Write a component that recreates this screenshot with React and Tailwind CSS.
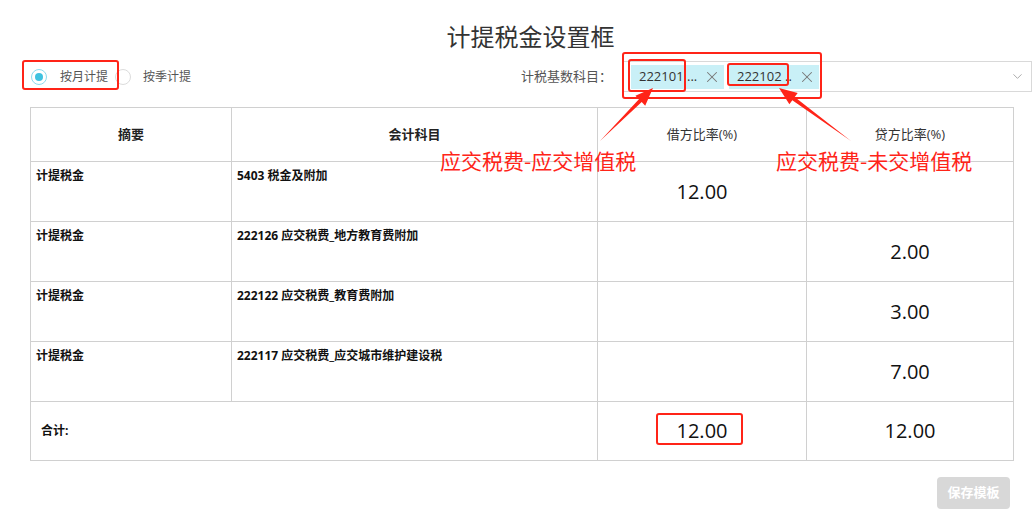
import React from "react";
import { X, ChevronDown } from "lucide-react";

const FONT = { fontFamily: '"Open Sans","Noto Sans CJK SC",sans-serif' };

function Tag({ text, w }) {
  return (
    <div className={`flex items-center h-[24px] bg-[#c9f0f7] pl-[8px] pr-[3px] ${w}`}>
      <span className="flex-1 text-[13px] text-[#333] whitespace-nowrap leading-none">{text}</span>
      <X size={18} strokeWidth={1.4} className="text-[#777]" />
    </div>
  );
}

const rows = [
  { a: "计提税金", b: "5403 税金及附加", c: "12.00", d: "" },
  { a: "计提税金", b: "222126 应交税费_地方教育费附加", c: "", d: "2.00" },
  { a: "计提税金", b: "222122 应交税费_教育费附加", c: "", d: "3.00" },
  { a: "计提税金", b: "222117 应交税费_应交城市维护建设税", c: "", d: "7.00" },
];

export default function App() {
  const bd = "border border-[#d0d0d0]";
  return (
    <div className="relative w-[1032px] h-[510px] bg-white overflow-hidden" style={FONT}>
      <div className="h-[61px] pt-[22px] pl-[29px] text-center text-[24px] leading-[30px] text-[#333]">计提税金设置框</div>

      <div className="flex items-center h-[31px]">
        <div className="flex items-center pl-[31px]">
          <span className="w-[16px] h-[16px] rounded-full border border-[#8cdcee] flex items-center justify-center">
            <span className="w-[8px] h-[8px] rounded-full bg-[#3fc2e0]" />
          </span>
          <span className="ml-[13px] text-[12px] text-[#555] w-[48px]">按月计提</span>
          <span className="ml-[7px] w-[16px] h-[16px] rounded-full border border-[#dcdcdc]" />
          <span className="ml-[12px] text-[12px] text-[#555]">按季计提</span>
        </div>
        <div className="ml-auto flex items-center">
          <span className="text-[13px] text-[#555] mr-[11px]">计税基数科目：</span>
          <div className="w-[409px] h-[31px] border border-[#d9d9d9] flex items-center pl-[7px] pr-[6px] gap-[5px]">
            <Tag text="222101 ..." w="w-[93px]" />
            <Tag text="222102 .." w="w-[90px]" />
            <ChevronDown size={15} strokeWidth={1.3} className="ml-auto text-[#999]" />
          </div>
        </div>
      </div>

      <table className="mt-[15px] ml-[30px] w-[983px] table-fixed border-collapse">
        <colgroup>
          <col className="w-[201px]" />
          <col className="w-[366px]" />
          <col className="w-[209px]" />
          <col className="w-[207px]" />
        </colgroup>
        <thead>
          <tr className="h-[54px]">
            <th className={`${bd} text-[13px] font-bold text-[#222]`}>摘要</th>
            <th className={`${bd} text-[13px] font-bold text-[#222]`}>会计科目</th>
            <th className={`${bd} text-[13px] font-normal text-[#333]`}>借方比率(%)</th>
            <th className={`${bd} text-[13px] font-normal text-[#333]`}>贷方比率(%)</th>
          </tr>
        </thead>
        <tbody>
          {rows.map((r, i) => (
            <tr key={i} className="h-[60px]">
              <td className={`${bd} align-top pl-[5px] pt-[5px] text-[12px] font-bold text-[#111]`}>{r.a}</td>
              <td className={`${bd} align-top pl-[5px] pt-[5px] text-[12px] font-bold text-[#111]`}>{r.b}</td>
              <td className={`${bd} text-center text-[20px] text-[#111]`}>{r.c}</td>
              <td className={`${bd} text-center text-[20px] text-[#111]`}>{r.d}</td>
            </tr>
          ))}
          <tr className="h-[59px]">
            <td colSpan={2} className={`${bd} pl-[10px] text-[12px] font-bold text-[#111]`}>合计:</td>
            <td className={`${bd} text-center text-[20px] text-[#111]`}>12.00</td>
            <td className={`${bd} text-center text-[20px] text-[#111]`}>12.00</td>
          </tr>
        </tbody>
      </table>

      <div className="flex justify-end pr-[22px] mt-[16px]">
        <button className="w-[73px] h-[32px] rounded-[4px] bg-[#d8d8d8] text-white text-[13px] font-bold">保存模板</button>
      </div>

      {/* annotations */}
      <div className="absolute left-[22px] top-[60px] w-[97px] h-[30px] border-2 border-[#ff2418] rounded-[3px]" />
      <div className="absolute left-[622px] top-[52px] w-[200px] h-[47px] border-2 border-[#ff2418] rounded-[3px]" />
      <div className="absolute left-[628px] top-[59px] w-[58px] h-[33px] border-2 border-[#ff2418] rounded-[3px]" />
      <div className="absolute left-[727px] top-[63px] w-[62px] h-[23px] border-2 border-[#ff2418] rounded-[3px]" />
      <div className="absolute left-[656px] top-[413px] w-[87px] h-[32px] border-2 border-[#ff2418] rounded-[3px]" />
      <div className="absolute left-[440px] top-[146px] text-[21px] leading-[28px] text-[#ff2418] whitespace-nowrap" style={{ fontFamily: '"Noto Sans CJK SC",sans-serif' }}>应交税费-应交增值税</div>
      <div className="absolute left-[776px] top-[146px] text-[21px] leading-[28px] text-[#ff2418] whitespace-nowrap" style={{ fontFamily: '"Noto Sans CJK SC",sans-serif' }}>应交税费-未交增值税</div>
      <svg className="absolute left-0 top-0 pointer-events-none" width="1032" height="510">
        <polygon fill="#ff2418" points="600,141 641.7,102.1 645.2,105.7 653,88 635.4,95.8 638.9,99.3" />
        <polygon fill="#ff2418" points="851,141 794.7,97.1 797.7,93.1 779,88 789.4,104.3 792.3,100.3" />
      </svg>
    </div>
  );
}
